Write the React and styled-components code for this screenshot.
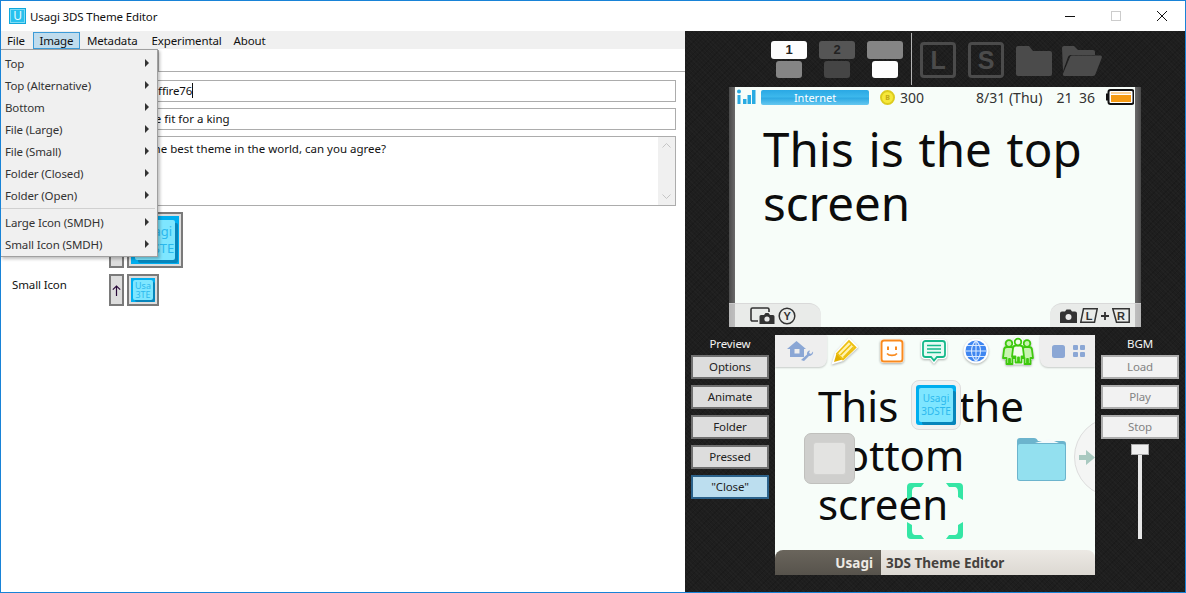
import React from "react";
import styled, { createGlobalStyle } from "styled-components";

const GlobalStyle = createGlobalStyle`
  html, body {
    margin: 0;
    padding: 0;
    background: #fff;
    overflow: hidden;
  }
  * { box-sizing: border-box; }
`;

const uiFont = `"Noto Sans", "Open Sans", sans-serif`;

const Window = styled.div`
  position: relative;
  width: 1186px;
  height: 593px;
  border: 1px solid #1883d7;
  display: flex;
  flex-direction: column;
  font-family: ${uiFont};
  font-size: 11.5px;
  letter-spacing: -0.13px;
  color: #111;
  background: #fff;
  overflow: hidden;
`;

const TitleBar = styled.div`
  height: 30px;
  display: flex;
  align-items: center;
  padding-left: 8px;
  flex: none;
`;

const AppIcon = styled.div`
  width: 17px;
  height: 16px;
  background: #29c1ee;
  border: 1px solid #0fa8dc;
  color: #eafcff;
  font-size: 12px;
  line-height: 14px;
  text-align: center;
  box-shadow: inset 0 0 0 1px #7fdcf5;
`;

const Title = styled.div`
  margin-left: 4px;
`;

const WindowButtons = styled.div`
  margin-left: auto;
  display: flex;
  align-items: center;
`;

const WindowButton = styled.div`
  width: 46px;
  height: 30px;
  display: flex;
  align-items: center;
  justify-content: center;
`;

const Body = styled.div`
  flex: 1;
  display: flex;
  min-height: 0;
`;

const LeftPane = styled.div`
  position: relative;
  width: 684px;
  flex: none;
  display: flex;
  flex-direction: column;
`;

const MenuBar = styled.div`
  height: 18px;
  background: #f0f0f0;
  display: flex;
  flex: none;
`;

const MenuTitle = styled.div`
  height: ${({ $active }) => ($active ? "17px" : "18px")};
  margin-top: ${({ $active }) => ($active ? "1px" : "0")};
  margin-left: ${({ $gap }) => $gap}px;
  padding: 0 ${({ $active }) => ($active ? "6.5px" : "6px")};
  line-height: ${({ $active }) => ($active ? "17px" : "19px")};
  background: ${({ $active }) => ($active ? "#c0dced" : "transparent")};
  outline: ${({ $active }) => ($active ? "1px solid #3c9bd8" : "none")};
  outline-offset: -1px;
  white-space: nowrap;
`;

const Dropdown = styled.div`
  position: absolute;
  left: -1px;
  top: 18px;
  width: 158px;
  height: 208px;
  background: #f0f0f0;
  border: 1px solid #a0a0a0;
  box-shadow: 2px 2px 3px rgba(0, 0, 0, 0.25);
  z-index: 5;
  padding-top: 2px;
`;

const DropItem = styled.div`
  height: 22px;
  display: flex;
  align-items: center;
  justify-content: space-between;
  padding: 0 8px 0 4px;
  color: #333;
`;

const Caret = styled.span`
  width: 0;
  height: 0;
  border-left: 4px solid #333;
  border-top: 4px solid transparent;
  border-bottom: 4px solid transparent;
`;

const DropSeparator = styled.div`
  height: 1px;
  background: #d0d0d0;
  margin: 2px 2px 2px 0;
`;

const TabStrip = styled.div`
  height: 23px;
  border-bottom: 1px solid #acacac;
  padding-left: 2px;
  display: flex;
  align-items: flex-end;
  flex: none;
`;

const Tab = styled.div`
  width: 156px;
  height: 21px;
  border: 1px solid #acacac;
  border-bottom: none;
  padding-left: 6px;
  line-height: 20px;
`;

const Form = styled.div`
  padding: 8px 9px 0 11px;
  display: grid;
  grid-template-columns: 97px 1fr;
  row-gap: 6px;
`;

const FieldLabel = styled.div`
  padding-top: 2px;
`;

const TextBox = styled.div`
  height: 22px;
  border: 1px solid #acacac;
  padding-left: 3px;
  line-height: 20px;
  letter-spacing: ${({ $tight }) => ($tight ? "-0.13px" : "0")};
  white-space: nowrap;
`;

const TextArea = styled.div`
  height: 70px;
  border: 1px solid #acacac;
  padding-left: 3px;
  display: flex;
  justify-content: space-between;
  line-height: 19px;
  letter-spacing: 0;
`;

const AreaText = styled.span`
  padding-top: 2px;
`;

const ScrollTrack = styled.div`
  width: 17px;
  background: #f0f0f0;
  display: flex;
  flex-direction: column;
  justify-content: space-between;
  align-items: center;
  padding: 6px 0;
`;

const TextCursor = styled.span`
  display: inline-block;
  width: 1px;
  height: 15px;
  background: #111;
  vertical-align: -3px;
`;

const IconRow = styled.div`
  display: flex;
  gap: 3px;
  align-items: stretch;
  height: ${({ $h }) => $h}px;
`;

const RowLabel = styled.div`
  padding-top: 3px;
`;

const UpButton = styled.div`
  width: 15px;
  background: #dddddd;
  border: 2px solid #7a7a7a;
  display: flex;
  align-items: center;
  justify-content: center;
`;

const IconFrame = styled.div`
  background: #dddddd;
  border: 2px solid #7a7a7a;
  padding: 2px;
`;

const UsagiArt = styled.div`
  position: relative;
  width: ${({ $size }) => $size}px;
  height: ${({ $size }) => $size}px;
  background: #00aeef;
  padding: ${({ $size }) => Math.round($size / 12)}px;
  border-radius: ${({ $round }) => ($round ? "3px" : "0")};
  flex: none;
`;

const UsagiFace = styled.div`
  width: 100%;
  height: 100%;
  background: #7ee6ff;
  border-radius: 2px;
  box-shadow: ${({ $size }) => Math.round($size / 16)}px ${({ $size }) => Math.round($size / 16)}px 0 #0785bb;
  color: #2cb9ee;
  font-size: ${({ $size }) => ($size > 45 ? 13 : $size > 30 ? 10 : 9)}px;
  line-height: ${({ $size }) => ($size > 45 ? 17 : $size > 30 ? 13 : 9)}px;
  letter-spacing: 0;
  display: flex;
  flex-direction: column;
  align-items: center;
  justify-content: center;
  white-space: nowrap;
`;

const RightPane = styled.div`
  width: 500px;
  flex: none;
  display: flex;
  flex-direction: column;
  background-color: #1e1e1e;
  background-image: repeating-linear-gradient(45deg, rgba(255, 255, 255, 0.018) 0 1px, transparent 1px 3px),
    repeating-linear-gradient(-45deg, rgba(0, 0, 0, 0.12) 0 1px, transparent 1px 4px);
`;

const Toolbar = styled.div`
  height: 56px;
  display: flex;
  align-items: center;
  padding-left: 86px;
  flex: none;
`;

const Slot = styled.div`
  width: 36px;
  margin-right: 12px;
  height: 37px;
  display: flex;
  flex-direction: column;
  align-items: center;
  gap: 2px;
`;

const SlotTop = styled.div`
  width: 36px;
  height: 18px;
  border-radius: 3px;
  background: ${({ $bg }) => $bg};
  color: #222;
  font-family: "Liberation Sans", sans-serif;
  font-size: 13px;
  font-weight: bold;
  line-height: 18px;
  text-align: center;
`;

const SlotBottom = styled.div`
  width: 26px;
  height: 17px;
  border-radius: 3px;
  background: ${({ $bg }) => $bg};
`;

const Divider = styled.div`
  width: 1px;
  height: 52px;
  background: #b5b5b5;
  margin: 0 8px 0 -4px;
`;

const LetterBox = styled.div`
  width: 36px;
  height: 36px;
  margin-right: 12px;
  margin-top: 2px;
  border: 3px solid #4b4b4b;
  border-radius: 4px;
  color: #4b4b4b;
  font-family: "Liberation Sans", sans-serif;
  font-weight: bold;
  font-size: 25px;
  line-height: 30px;
  text-align: center;
`;

const ToolIcon = styled.svg`
  margin-right: ${({ $gap }) => $gap}px;
  margin-top: 3px;
  flex: none;
`;

const TopScreen = styled.div`
  position: relative;
  margin-left: 44px;
  width: 412px;
  height: 240px;
  flex: none;
  display: flex;
  background: #f7fdf9;
  overflow: hidden;
`;

const SideStrip = styled.div`
  width: 6px;
  background: linear-gradient(${({ $r }) => ($r ? "to left" : "to right")}, #4a4a4a, #6a6a6a);
  flex: none;
`;

const TopContent = styled.div`
  flex: 1;
  min-width: 0;
`;

const StatusBar = styled.div`
  height: 22px;
  display: flex;
  align-items: center;
  padding: 0 1px 2px 2px;
  color: #333;
  font-size: 14px;
  letter-spacing: 0;
  white-space: nowrap;
`;

const InternetPill = styled.div`
  width: 108px;
  height: 15px;
  margin-left: 5px;
  border-radius: 2px;
  background: linear-gradient(#2aa8e4, #3cb8ec 45%, #2ea9e3 55%, #66c8f0);
  color: #ffffff;
  font-size: 11px;
  line-height: 15px;
  text-align: center;
`;

const Coin = styled.div`
  width: 15px;
  height: 15px;
  margin-left: 11px;
  border-radius: 50%;
  background: #f6e83a;
  border: 2px solid #dccb1e;
  color: #c0a818;
  font-size: 7px;
  font-weight: bold;
  line-height: 11px;
  text-align: center;
`;

const StatusText = styled.span`
  margin-left: ${({ $gap }) => $gap}px;
  word-spacing: ${({ $ws }) => $ws || 0}px;
`;

const StatusSpacer = styled.span`
  flex: 1;
`;

const BigText = styled.div`
  font-family: ${uiFont};
  color: #0c0c0c;
  letter-spacing: 0;
  word-spacing: ${({ $ws }) => $ws}px;
  font-size: ${({ $size }) => $size}px;
  line-height: ${({ $lh }) => $lh}px;
  padding-left: ${({ $left }) => $left}px;
  padding-top: ${({ $top }) => $top}px;
  width: ${({ $w }) => $w}px;
`;

const CameraTab = styled.div`
  position: absolute;
  bottom: 0;
  ${({ $right }) => ($right ? "right: 0;" : "left: 0;")}
  width: ${({ $w }) => $w}px;
  height: 24px;
  background: rgba(226, 226, 226, 0.7);
  border-top: 1px solid rgba(210, 210, 210, 0.7);
  border-radius: ${({ $right }) => ($right ? "12px 0 0 0" : "0 12px 0 0")};
  display: flex;
  align-items: center;
  justify-content: ${({ $right }) => ($right ? "flex-end" : "flex-start")};
  gap: 3px;
  padding: ${({ $right }) => ($right ? "0 11px 0 0" : "0 0 0 21px")};
`;

const LowerRow = styled.div`
  display: flex;
  gap: 6px;
  padding: 8px 0 0 6px;
`;

const SideColumn = styled.div`
  width: 78px;
  display: flex;
  flex-direction: column;
  gap: 6px;
  flex: none;
`;

const SideLabel = styled.div`
  height: 14px;
  color: #f4f4f4;
  line-height: 18px;
  text-align: center;
`;

const SideButton = styled.div`
  height: 24px;
  border: 2px solid ${({ $variant }) => ({ active: "#2c628b", off: "#adadad" }[$variant] || "#707070")};
  background: ${({ $variant }) => ({ active: "#bcdeef", off: "#f2f2f2" }[$variant] || "#dddddd")};
  color: ${({ $variant }) => ($variant === "off" ? "#838383" : "#222")};
  line-height: 20px;
  text-align: center;
`;

const SliderBox = styled.div`
  display: flex;
  flex-direction: column;
  align-items: center;
  margin-top: -1px;
`;

const SliderThumb = styled.div`
  width: 18px;
  height: 11px;
  background: #f0f0f0;
  border: 1px solid #acacac;
`;

const SliderTrack = styled.div`
  width: 4px;
  height: 84px;
  background: #e7e7e7;
`;

const BottomScreen = styled.div`
  position: relative;
  width: 320px;
  height: 240px;
  flex: none;
  background: #f7fdf9;
  display: flex;
  flex-direction: column;
  overflow: hidden;
`;

const AppStrip = styled.div`
  height: 32px;
  display: flex;
  align-items: stretch;
  flex: none;
`;

const CornerTab = styled.div`
  width: ${({ $w }) => $w}px;
  background: #eeeeee;
  border-radius: ${({ $right }) => ($right ? "0 0 0 8px" : "0 0 8px 0")};
  box-shadow: 0 1px 2px rgba(0, 0, 0, 0.2);
  display: flex;
  align-items: center;
  justify-content: center;
  gap: 8px;
  flex: none;
  ${({ $right }) => ($right ? "padding-left: 2px;" : "")}
`;

const AppIcons = styled.div`
  flex: 1;
  display: flex;
  align-items: center;
  padding-left: 4px;
`;

const Sticker = styled.svg`
  margin-left: ${({ $ml }) => $ml || 0}px;
  filter: drop-shadow(0 1px 1px rgba(0, 0, 0, 0.3));
  flex: none;
`;

const Canvas = styled.div`
  position: relative;
  flex: 1;
  min-height: 0;
`;

const CanvasItem = styled.div`
  position: absolute;
  left: ${({ $x }) => $x}px;
  top: ${({ $y }) => $y}px;
`;

const IconPlate = styled.div`
  width: 50px;
  height: 50px;
  background: #f0f2f2;
  border: 1px solid #dddddd;
  border-radius: 8px;
  padding: 4px;
`;

const GreySquare = styled.div`
  width: 51px;
  height: 51px;
  background: #cfcfcd;
  border: 1px solid #c0c0bd;
  border-radius: 7px;
  padding: 8px;
`;

const GreyInner = styled.div`
  width: 100%;
  height: 100%;
  background: #e3e3e1;
  border: 1px solid #d2d2d0;
  border-radius: 3px;
`;

const ArrowCircle = styled.div`
  width: 80px;
  height: 80px;
  border-radius: 50%;
  background: #f4f5f4;
  border: 1px solid #dddddd;
  display: flex;
  align-items: center;
  padding-left: 4px;
`;

const Footer = styled.div`
  height: 25px;
  flex: none;
  display: flex;
  font-weight: bold;
  font-size: 13.5px;
  letter-spacing: 0;
  line-height: 26px;
  white-space: nowrap;
`;

const FooterDark = styled.div`
  width: 106px;
  background: linear-gradient(#6a655c, #57534c);
  border-radius: 8px 0 0 0;
  color: #eeeae4;
  text-align: right;
  padding-right: 8px;
`;

const FooterLight = styled.div`
  flex: 1;
  background: linear-gradient(#ece9e4, #dcd8d2);
  border-radius: 0 8px 0 0;
  color: #45423e;
  padding-left: 5px;
`;

const menuEntries = ["Top", "Top (Alternative)", "Bottom", "File (Large)", "File (Small)", "Folder (Closed)", "Folder (Open)"];
const smdhEntries = ["Large Icon (SMDH)", "Small Icon (SMDH)"];
const previewButtons = ["Options", "Animate", "Folder", "Pressed"];
const bgmButtons = ["Load", "Play", "Stop"];

const UpArrow = () => (
  <svg width="9" height="11" viewBox="0 0 9 11">
    <path d="M4.500 1v10M.8 4.600 4.500 1l3.700 3.600" fill="none" stroke="#2a0a3a" strokeWidth="1.200" />
  </svg>
);

const Usagi = ({ size, lines, round }) => (
  <UsagiArt $size={size} $round={round}>
    <UsagiFace $size={size}>
      {lines.map((l) => (
        <span key={l}>{l}</span>
      ))}
    </UsagiFace>
  </UsagiArt>
);

const FolderClosed = () => (
  <ToolIcon $gap={10} width="36" height="30" viewBox="0 0 36 30">
    <path d="M2 0h11l4 5h17a2 2 0 0 1 2 2v21a2 2 0 0 1-2 2H2a2 2 0 0 1-2-2V2a2 2 0 0 1 2-2z" fill="#4b4b4b" />
  </ToolIcon>
);

const FolderOpen = () => (
  <ToolIcon $gap={0} width="40" height="30" viewBox="0 0 40 30">
    <path d="M0 2a2 2 0 0 1 2-2h10l4 4h15a2 2 0 0 1 2 2v3H9a3 3 0 0 0-3 2L1 25z" fill="#4b4b4b" />
    <path d="M8 11a2 2 0 0 1 2-1.500h28c1.500 0 2.300 1 1.800 2.300L33.500 28c-.4 1.200-1.300 2-2.500 2H2.500C1 30 .5 29 1 27.700z" fill="#4b4b4b" />
  </ToolIcon>
);

const SignalIcon = () => (
  <svg width="19" height="16" viewBox="0 0 19 16">
    <circle cx="2" cy="2.500" r="2" fill="#29abe2" />
    <rect x="0.500" y="6" width="3" height="9" fill="#29abe2" />
    <rect x="6" y="10" width="3.500" height="5" fill="#29abe2" />
    <rect x="10.500" y="6" width="3.500" height="9" fill="#29abe2" />
    <rect x="15" y="1" width="3.500" height="14" fill="#29abe2" />
  </svg>
);

const BatteryIcon = () => (
  <svg width="28" height="16" viewBox="0 0 28 16">
    <rect x="0" y="4.500" width="3" height="7" fill="#111" />
    <rect x="2.500" y="1" width="25" height="14" rx="2" fill="#fff" stroke="#111" strokeWidth="2" />
    <rect x="5" y="3" width="20" height="2" fill="#fbd49a" />
    <rect x="5" y="6" width="20" height="7" fill="#f59a12" />
  </svg>
);

const CameraOutline = () => (
  <svg width="25" height="17" viewBox="0 0 25 17">
    <path d="M8 14H2.500A1.500 1.500 0 0 1 1 12.500v-10A1.500 1.500 0 0 1 2.500 1h15A1.500 1.500 0 0 1 19 2.500V5" fill="none" stroke="#333" strokeWidth="1.600" />
    <path d="M11 8h3l1.500-2h3L20 8h3a1.500 1.500 0 0 1 1.500 1.500V17H9.500V9.500A1.500 1.500 0 0 1 11 8z" fill="#333" />
    <circle cx="17" cy="12" r="2.600" fill="#e9e9e9" />
  </svg>
);

const YButton = () => (
  <svg width="18" height="18" viewBox="0 0 18 18">
    <circle cx="9" cy="9" r="7.800" fill="none" stroke="#333" strokeWidth="1.500" />
    <text x="9" y="13" textAnchor="middle" fontFamily="Liberation Sans" fontWeight="bold" fontSize="11" fill="#333">Y</text>
  </svg>
);

const CameraSolid = () => (
  <svg width="17" height="14" viewBox="0 0 17 14">
    <path d="M2 2.500h3L6.500.5h4L12 2.500h3A2 2 0 0 1 17 4.500V14H0V4.500a2 2 0 0 1 2-2z" fill="#333" />
    <circle cx="8.500" cy="8" r="3" fill="#e9e9e9" />
  </svg>
);

const ShoulderButton = ({ letter, flip }) => (
  <svg width="18" height="15" viewBox="0 0 18 15">
    <path d={flip ? "M.8.8H17.200V14.200H4.500z" : "M3.500.8H17.200L14.500 14.200H.8z"} fill="none" stroke="#333" strokeWidth="1.500" />
    <text x="9" y="12" textAnchor="middle" fontFamily="Liberation Sans" fontWeight="bold" fontSize="11" fill="#333">{letter}</text>
  </svg>
);

const PlusMark = () => (
  <svg width="8" height="8" viewBox="0 0 8 8">
    <path d="M4 0v8M0 4h8" stroke="#333" strokeWidth="1.800" />
  </svg>
);

const HomeWrench = () => (
  <svg width="28" height="22" viewBox="0 0 28 22">
    <path d="M9.500 1 19 9h-2v8H3V9H0z" fill="#8ba7d5" />
    <rect x="7.500" y="9" width="5" height="4.500" fill="#eeeeee" />
    <path d="M14 20l6-5.500c-.5-2 1-4 3-4l-1 2.500 2 1 2-2.500c.5 2-1 4.500-4 4.500l-5 5z" fill="#8ba7d5" />
  </svg>
);

const Pencil = () => (
  <Sticker width="28" height="28" viewBox="0 0 28 28">
    <path d="M2 26l3-10L18 2l8 8-14 13z" fill="#fff" stroke="#fff" strokeWidth="2" />
    <path d="M3 25l2.500-8.500 6 6z" fill="#e2b000" />
    <path d="M6 16.500 18 4l6.500 6.500L12 22.500z" fill="#fff2b0" stroke="#edc012" strokeWidth="1.800" />
    <path d="M9.500 18 20 7.500M12.500 20.500 22.500 10" stroke="#edc012" strokeWidth="1.600" />
  </Sticker>
);

const Smile = () => (
  <Sticker $ml={20} width="26" height="26" viewBox="0 0 26 26">
    <rect x="1" y="1" width="24" height="24" rx="4" fill="#fff" />
    <rect x="2.500" y="2.500" width="21" height="21" rx="2.500" fill="#fff" stroke="#f98a1e" strokeWidth="2" />
    <rect x="8" y="8.500" width="2" height="3.500" fill="#f98a1e" />
    <rect x="16" y="8.500" width="2" height="3.500" fill="#f98a1e" />
    <path d="M8 15.500c2 2.500 8 2.500 10 0" fill="none" stroke="#f98a1e" strokeWidth="1.600" />
  </Sticker>
);

const Chat = () => (
  <Sticker $ml={15} width="28" height="27" viewBox="0 0 28 27">
    <path d="M5 1h18a4 4 0 0 1 4 4v12a4 4 0 0 1-4 4h-5l-4 5-4-5H5a4 4 0 0 1-4-4V5a4 4 0 0 1 4-4z" fill="#fff" />
    <path d="M5.500 3h17A2.500 2.500 0 0 1 25 5.500v11a2.500 2.500 0 0 1-2.500 2.500H17l-3 3.500-3-3.500H5.500A2.500 2.500 0 0 1 3 16.500v-11A2.500 2.500 0 0 1 5.500 3z" fill="#e8fbf4" stroke="#16b98b" strokeWidth="1.800" />
    <path d="M7 7.500h14M7 11h14M7 14.500h14" stroke="#16b98b" strokeWidth="1.700" />
  </Sticker>
);

const Globe = () => (
  <Sticker $ml={15} width="26" height="26" viewBox="0 0 26 26">
    <circle cx="13" cy="13" r="12.500" fill="#fff" />
    <circle cx="13" cy="13" r="10.500" fill="#3f86f0" />
    <path d="M13 2.500v21M2.500 13h21M4 7.500h18M4 18.500h18M13 2.500c-6 6-6 15 0 21M13 2.500c6 6 6 15 0 21" fill="none" stroke="#d9e9ff" strokeWidth="1.100" />
  </Sticker>
);

const MiiFigure = ({ x, y, fill }) => (
  <g transform={`translate(${x} ${y})`} fill={fill} stroke="#3ec90e" strokeWidth="1.800" strokeLinejoin="round">
    <path d="M2 10c0-2 1-3 3-3h4c2 0 3 1 3 3l1 8h-2.500v6h-2.500v-5h-1v5H4.500v-6H1z" />
    <circle cx="7" cy="3.500" r="3.300" />
  </g>
);

const Miis = () => (
  <Sticker $ml={13} width="32" height="28" viewBox="0 0 32 28">
    <path d="M16 0c3 0 5 2 5 5 4-1 6 1 7 4l3 11c0 2-2 3-4 3l-1 4H7l-1-4c-2 0-4-1-4-3L5 9c1-3 3-5 7-4-1-3 1-5 4-5z" fill="#fff" stroke="#fff" />
    <MiiFigure x={0} y={3} fill="#c8f4b0" />
    <MiiFigure x={18} y={3} fill="#c8f4b0" />
    <MiiFigure x={9} y={1.500} fill="#f2fdec" />
  </Sticker>
);

const GridMode = () => (
  <svg width="12" height="12" viewBox="0 0 12 12" fill="#8ba7d5">
    <rect width="5" height="5" rx="1" />
    <rect x="7" width="5" height="5" rx="1" />
    <rect y="7" width="5" height="5" rx="1" />
    <rect x="7" y="7" width="5" height="5" rx="1" />
  </svg>
);

const SingleMode = () => (
  <svg width="13" height="13" viewBox="0 0 13 13">
    <rect width="13" height="13" rx="2.500" fill="#8ba7d5" />
  </svg>
);

const FolderArt = () => (
  <svg width="49" height="43" viewBox="0 0 49 43">
    <path d="M3 0h14c2 0 3 1 4 3h25a3 3 0 0 1 3 3v34a3 3 0 0 1-3 3H3a3 3 0 0 1-3-3V3a3 3 0 0 1 3-3z" fill="#6cb4cd" />
    <path d="M18 5l14-4 10 4z" fill="#f5fbfc" />
    <path d="M1 8a2 2 0 0 1 2-2h43a2 2 0 0 1 2 2v32a2 2 0 0 1-2 2H3a2 2 0 0 1-2-2z" fill="#93e0ef" />
  </svg>
);

const bracketCorner = "M4 0H17L14 4H9C6 4 5 6 5 9V14L0 17V4A4 4 0 0 1 4 0Z";

const Brackets = () => (
  <svg width="56" height="56" viewBox="0 0 56 56" fill="#35e6a5">
    <path d={bracketCorner} />
    <path d={bracketCorner} transform="translate(56 0) scale(-1 1)" />
    <path d={bracketCorner} transform="translate(0 56) scale(1 -1)" />
    <path d={bracketCorner} transform="translate(56 56) scale(-1 -1)" />
  </svg>
);

const SmallArrow = () => (
  <svg width="16" height="15" viewBox="0 0 16 15">
    <path d="M0 5h7V0l9 7.500L7 15v-5H0z" fill="#a9c9c0" />
  </svg>
);

const App = () => (
  <Window>
    <GlobalStyle />
    <TitleBar>
      <AppIcon>U</AppIcon>
      <Title>Usagi 3DS Theme Editor</Title>
      <WindowButtons>
        <WindowButton>
          <svg width="10" height="10"><path d="M0 5.500h10" stroke="#111" /></svg>
        </WindowButton>
        <WindowButton>
          <svg width="10" height="10"><rect x=".5" y=".5" width="9" height="9" fill="none" stroke="#ccc" /></svg>
        </WindowButton>
        <WindowButton>
          <svg width="10" height="10"><path d="M0 0l10 10M10 0 0 10" stroke="#111" /></svg>
        </WindowButton>
      </WindowButtons>
    </TitleBar>
    <Body>
      <LeftPane>
        <MenuBar>
          <MenuTitle $gap={0}>File</MenuTitle>
          <MenuTitle $gap={2} $active>Image</MenuTitle>
          <MenuTitle $gap={1}>Metadata</MenuTitle>
          <MenuTitle $gap={2}>Experimental</MenuTitle>
          <MenuTitle $gap={0}>About</MenuTitle>
        </MenuBar>
        <Dropdown>
          {menuEntries.map((m) => (
            <DropItem key={m}>{m}<Caret /></DropItem>
          ))}
          <DropSeparator />
          {smdhEntries.map((m) => (
            <DropItem key={m}>{m}<Caret /></DropItem>
          ))}
        </Dropdown>
        <TabStrip>
          <Tab>Info</Tab>
        </TabStrip>
        <Form>
          <FieldLabel>Author</FieldLabel>
          <TextBox $tight>Usagi Saffire76<TextCursor /></TextBox>
          <FieldLabel>Name</FieldLabel>
          <TextBox>A temple fit for a king</TextBox>
          <FieldLabel>Description</FieldLabel>
          <TextArea>
            <AreaText>This is the best theme in the world, can you agree?</AreaText>
            <ScrollTrack>
              <svg width="9" height="5"><path d="M.5 4.500 4.500.5l4 4" fill="none" stroke="#c5c5c5" /></svg>
              <svg width="9" height="5"><path d="M.5.500l4 4 4-4" fill="none" stroke="#c5c5c5" /></svg>
            </ScrollTrack>
          </TextArea>
          <RowLabel>Large Icon</RowLabel>
          <IconRow $h={56}>
            <UpButton><UpArrow /></UpButton>
            <IconFrame><Usagi size={48} lines={["Usagi", "3DSTE"]} /></IconFrame>
          </IconRow>
          <RowLabel>Small Icon</RowLabel>
          <IconRow $h={32}>
            <UpButton><UpArrow /></UpButton>
            <IconFrame><Usagi size={24} lines={["Usa", "3TE"]} /></IconFrame>
          </IconRow>
        </Form>
      </LeftPane>
      <RightPane>
        <Toolbar>
          <Slot>
            <SlotTop $bg="#fdfdfd">1</SlotTop>
            <SlotBottom $bg="#858585" />
          </Slot>
          <Slot>
            <SlotTop $bg="#555555">2</SlotTop>
            <SlotBottom $bg="#454545" />
          </Slot>
          <Slot>
            <SlotTop $bg="#858585" />
            <SlotBottom $bg="#fdfdfd" />
          </Slot>
          <Divider />
          <LetterBox>L</LetterBox>
          <LetterBox>S</LetterBox>
          <FolderClosed />
          <FolderOpen />
        </Toolbar>
        <TopScreen>
          <SideStrip />
          <TopContent>
            <StatusBar>
              <SignalIcon />
              <InternetPill>Internet</InternetPill>
              <Coin>B</Coin>
              <StatusText $gap={5}>300</StatusText>
              <StatusText $gap={52}>8/31 (Thu)</StatusText>
              <StatusText $gap={14} $ws={3}>21 36</StatusText>
              <StatusSpacer />
              <BatteryIcon />
            </StatusBar>
            <BigText $size={47.5} $ws={2.5} $lh={54} $left={28} $top={13} $w={380}>This is the top screen</BigText>
          </TopContent>
          <SideStrip $r />
          <CameraTab $w={92}>
            <CameraOutline />
            <YButton />
          </CameraTab>
          <CameraTab $w={91} $right>
            <CameraSolid />
            <ShoulderButton letter="L" />
            <PlusMark />
            <ShoulderButton letter="R" flip />
          </CameraTab>
        </TopScreen>
        <LowerRow>
          <SideColumn>
            <SideLabel>Preview</SideLabel>
            {previewButtons.map((b) => (
              <SideButton key={b}>{b}</SideButton>
            ))}
            <SideButton $variant="active">"Close"</SideButton>
          </SideColumn>
          <BottomScreen>
            <AppStrip>
              <CornerTab $w={52}><HomeWrench /></CornerTab>
              <AppIcons>
                <Pencil />
                <Smile />
                <Chat />
                <Globe />
                <Miis />
              </AppIcons>
              <CornerTab $w={55} $right>
                <SingleMode />
                <GridMode />
              </CornerTab>
            </AppStrip>
            <Canvas>
              <BigText $size={42} $ws={4} $lh={49} $left={43} $top={14} $w={270}>This is the bottom screen</BigText>
              <CanvasItem $x={136} $y={13}>
                <IconPlate><Usagi size={40} lines={["Usagi", "3DSTE"]} round /></IconPlate>
              </CanvasItem>
              <CanvasItem $x={29} $y={66}>
                <GreySquare><GreyInner /></GreySquare>
              </CanvasItem>
              <CanvasItem $x={242} $y={71}><FolderArt /></CanvasItem>
              <CanvasItem $x={132} $y={116}><Brackets /></CanvasItem>
              <CanvasItem $x={299} $y={50}>
                <ArrowCircle><SmallArrow /></ArrowCircle>
              </CanvasItem>
            </Canvas>
            <Footer>
              <FooterDark>Usagi</FooterDark>
              <FooterLight>3DS Theme Editor</FooterLight>
            </Footer>
          </BottomScreen>
          <SideColumn>
            <SideLabel>BGM</SideLabel>
            {bgmButtons.map((b) => (
              <SideButton key={b} $variant="off">{b}</SideButton>
            ))}
            <SliderBox>
              <SliderThumb />
              <SliderTrack />
            </SliderBox>
          </SideColumn>
        </LowerRow>
      </RightPane>
    </Body>
  </Window>
);

export default App;
